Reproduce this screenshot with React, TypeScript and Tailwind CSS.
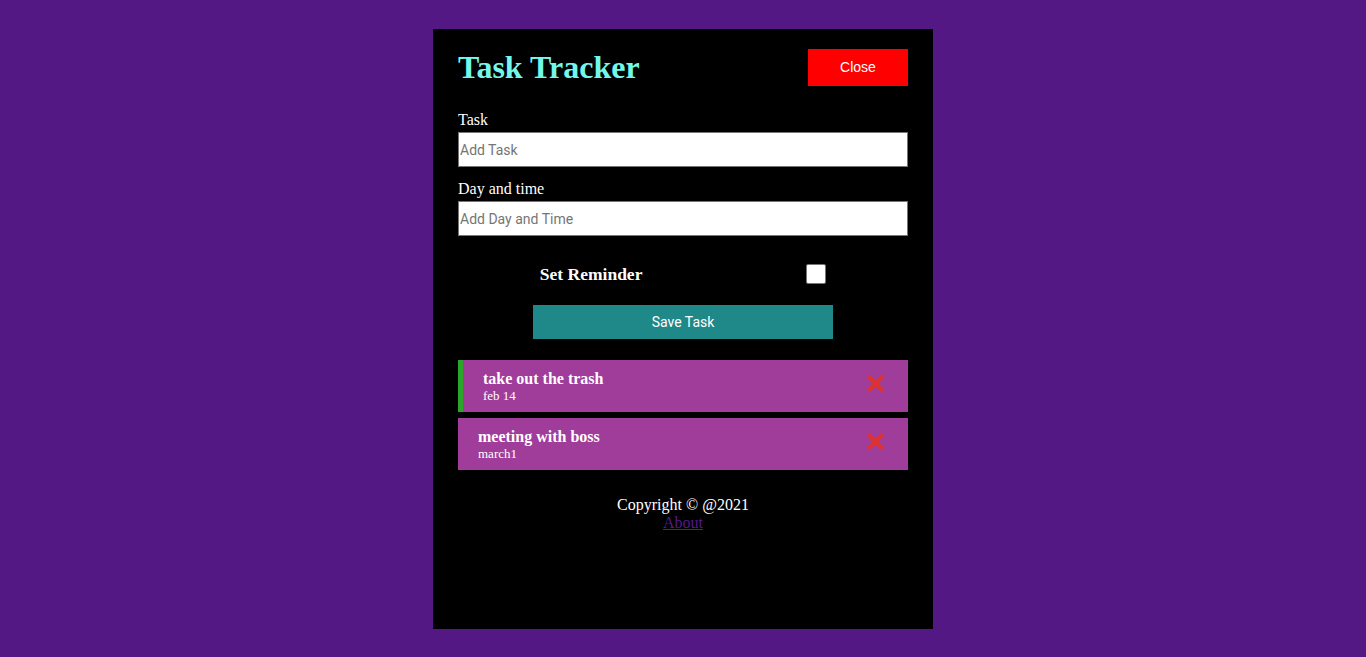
import React from "react";

const serif = { fontFamily: '"Liberation Serif", "Times New Roman", serif' } as React.CSSProperties;

function XIcon() {
  return (
    <svg width="17" height="17" viewBox="0 0 16 16" className="mt-[5px]">
      <path d="M2.5 2.5 L13.5 13.5 M13.5 2.5 L2.5 13.5" stroke="#dc3232" strokeWidth="3.8" strokeLinecap="round" />
    </svg>
  );
}

function Task({ text, day, reminder }: { text: string; day: string; reminder?: boolean }) {
  return (
    <div
      className={`flex justify-between items-start h-[52px] bg-[#a03c9a] pt-[10px] pr-[24px] ${reminder ? "border-l-[5px] border-[#2aa52a] pl-[20px]" : "pl-[20px]"}`}
    >
      <div className="text-white">
        <div className="font-bold text-[16px] leading-[18px]">{text}</div>
        <div className="text-[13px] leading-[15px]">{day}</div>
      </div>
      <XIcon />
    </div>
  );
}

export default function App() {
  return (
    <div className="min-h-screen bg-[#531883] pt-[29px]" style={serif}>
      <div className="mx-auto w-[500px] h-[600px] bg-black pt-[20px] px-[25px]">
        <header className="flex justify-between items-center h-[37px]">
          <h1 className="text-[32px] font-bold text-[#72f7ea] leading-[37px]">Task Tracker</h1>
          <button
            className="w-[100px] h-[37px] bg-[#ff0000] text-white text-[14px]"
            style={{ fontFamily: '"Liberation Sans", Arial, sans-serif' }}
          >
            Close
          </button>
        </header>

        <form className="mt-[25px]">
          <div>
            <label className="block text-white text-[16px] leading-[18px]">Task</label>
            <input
              type="text"
              placeholder="Add Task"
              className="mt-[3px] block w-full h-[35px] bg-white border border-[#767676] px-[1px] text-[14px] placeholder:text-[#757575] outline-none"
              style={{ fontFamily: 'Roboto, "Liberation Sans", sans-serif' }}
            />
          </div>
          <div className="mt-[13px]">
            <label className="block text-white text-[16px] leading-[18px]">Day and time</label>
            <input
              type="text"
              placeholder="Add Day and Time"
              className="mt-[3px] block w-full h-[35px] bg-white border border-[#767676] px-[1px] text-[14px] placeholder:text-[#757575] outline-none"
              style={{ fontFamily: 'Roboto, "Liberation Sans", sans-serif' }}
            />
          </div>
          <div className="flex justify-around items-center mt-[28px] h-[20px]">
            <label className="text-white font-bold text-[17.5px]">Set Reminder</label>
            <div className="w-[20px] h-[20px] bg-white border border-[#767676] rounded-[2px]" />
          </div>
          <div className="flex justify-center mt-[21px]">
            <button
              type="button"
              className="w-[300px] h-[34px] bg-[#1f8888] text-white text-[14px]"
              style={{ fontFamily: 'Roboto, "Liberation Sans", sans-serif' }}
            >
              Save Task
            </button>
          </div>
        </form>

        <div className="mt-[21px] flex flex-col gap-[6px]">
          <Task text="take out the trash" day="feb 14" reminder />
          <Task text="meeting with boss" day="march1" />
        </div>

        <footer className="mt-[26px] text-center text-white text-[16px] leading-[18px]">
          <p>Copyright © @2021</p>
          <a href="#" className="text-[#551a8b] underline">About</a>
        </footer>
      </div>
    </div>
  );
}
